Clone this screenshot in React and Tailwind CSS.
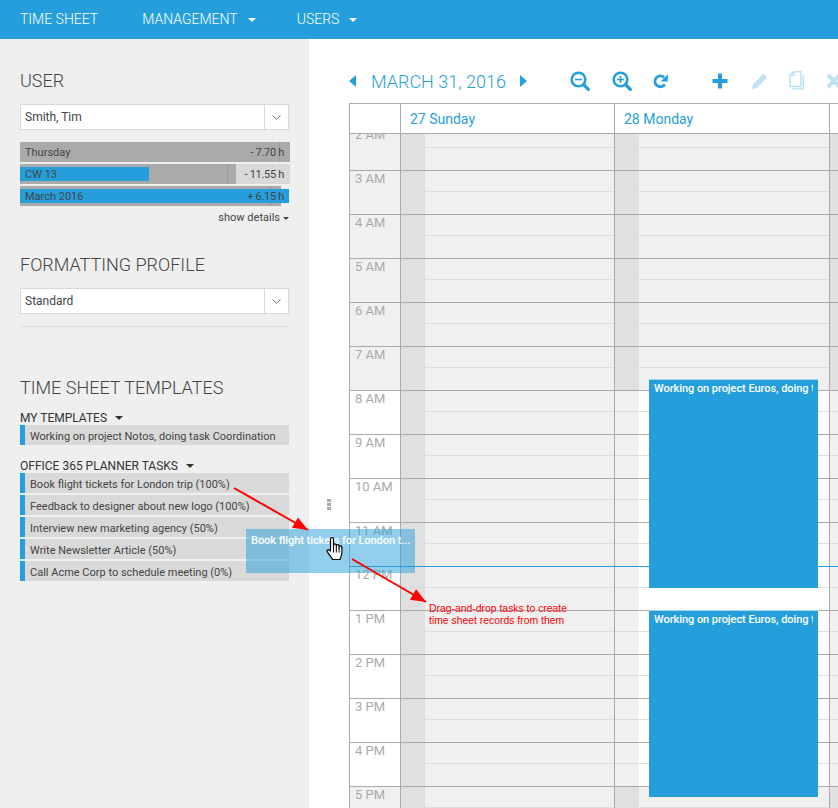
import React from 'react';
import { ChevronDown } from 'lucide-react';

const hours = ['2 AM', '3 AM', '4 AM', '5 AM', '6 AM', '7 AM', '8 AM', '9 AM', '10 AM', '11 AM', '12 PM', '1 PM', '2 PM', '3 PM', '4 PM', '5 PM', '6 PM'];
const myTemplates = ['Working on project Notos, doing task Coordination'];
const plannerTasks = [
    'Book flight tickets for London trip (100%)',
    'Feedback to designer about new logo (100%)',
    'Interview new marketing agency (50%)',
    'Write Newsletter Article (50%)',
    'Call Acme Corp to schedule meeting (0%)',
];

const Caret = ({ className = 'border-t-white', size = 'border-x-[4px] border-t-[4px]' }) => (
    <span className={`block w-0 h-0 border-x-transparent ${size} ${className}`} />
);

const Heading = ({ children, className = '' }) => (
    <h2 className={`h-[26px] leading-[26px] text-[18px] font-light text-[#444] uppercase ${className}`}>{children}</h2>
);

const Dropdown = ({ value }) => (
    <div className="h-[26px] w-[269px] flex bg-white border border-[#d9d9d9] text-[12px] text-[#444]">
        <div className="flex-1 pl-1 leading-[24px]">{value}</div>
        <div className="w-[24px] border-l border-[#d9d9d9] flex items-center justify-center">
            <ChevronDown size={15} strokeWidth={1.25} className="text-[#555]" />
        </div>
    </div>
);

const Bar = ({ label, value, greyWidth, tickAt, fill, track = 'bg-transparent' }) => (
    <div className={`relative h-5 w-[270px] text-[11px] leading-[21px] text-[#444] ${track}`}>
        <div className="absolute left-0 top-0 h-5 bg-[#aaa]" style={{ width: greyWidth }} />
        <div className="absolute top-0 h-5 w-px bg-[#999]" style={{ left: tickAt }} />
        {fill && <div className="absolute left-0 top-[3px] h-[14px] bg-[#259fdb]" style={{ width: fill }} />}
        <div className="relative flex justify-between pl-[5px] pr-[6px]">
            <span>{label}</span>
            <span className="tracking-[-0.3px]">{value}</span>
        </div>
    </div>
);

const TaskRow = ({ text }) => (
    <div className="h-5 w-[269px] flex bg-[#d9d9d9] text-[11px] leading-[21px] text-[#444]">
        <div className="w-[5px] shrink-0 bg-[#259fdb]" />
        <div className="pl-[5px] pt-px whitespace-nowrap">{text}</div>
    </div>
);

const Sidebar = () => (
    <aside className="w-[309px] shrink-0 bg-[#efefef] pl-5 pt-[29px]">
        <Heading>User</Heading>
        <div className="mt-[10px]"><Dropdown value="Smith, Tim" /></div>
        <div className="mt-3 flex flex-col gap-[2px]">
            <Bar label="Thursday" value="- 7.70 h" greyWidth={270} tickAt={259} />
            <Bar label="CW 13" value="- 11.55 h" greyWidth={216} tickAt={207} fill={129} track="bg-[#d9d9d9]" />
            <Bar label="March 2016" value="+ 6.15 h" greyWidth={261} tickAt={250} fill={269} />
        </div>
        <div className="mt-[3px] h-4 pt-[2px] w-[269px] flex items-center justify-end gap-[3px] text-[11px] text-[#444]">
            show details <Caret className="border-t-[#444]" size="border-x-[3px] border-t-[3px]" />
        </div>
        <Heading className="mt-[27px]">Formatting Profile</Heading>
        <div className="mt-[10px]"><Dropdown value="Standard" /></div>
        <div className="mt-3 h-px w-[269px] bg-[#ddd]" />
        <Heading className="mt-[48px]">Time Sheet Templates</Heading>
        <div className="mt-[9px] h-[15px] flex items-center gap-2 text-[12px] text-[#333]">
            MY TEMPLATES <Caret className="border-t-[#333]" />
        </div>
        {myTemplates.map((t) => <TaskRow key={t} text={t} />)}
        <div className="mt-[13px] h-[15px] flex items-center gap-2 text-[12px] text-[#333]">
            OFFICE 365 PLANNER TASKS <Caret className="border-t-[#333]" />
        </div>
        <div className="flex flex-col gap-[2px]">
            {plannerTasks.map((t) => <TaskRow key={t} text={t} />)}
        </div>
    </aside>
);

// toolbar glyphs drawn by hand, the icon packs do not have these exact shapes
const ZoomIcon = ({ plus }) => (
    <svg width="20" height="20" viewBox="0 0 20 20" fill="none" stroke="#259fdb">
        <circle cx="8.5" cy="8.5" r="6.8" strokeWidth="2.6" />
        <path d="M13.5 13.5 18.3 18.3" strokeWidth="3.2" strokeLinecap="round" />
        <path d="M5 8.5h7" strokeWidth="1.6" />
        {plus && <path d="M8.5 5v7" strokeWidth="1.6" />}
    </svg>
);

const RedoIcon = () => (
    <svg width="15" height="15" viewBox="0 0 15 15" fill="none">
        <path d="M11.8 10.400A5.400 5.400 0 1 1 11 3.400" stroke="#259fdb" strokeWidth="2.8" />
        <path d="M14.800 0.200V7.600H7.500Z" fill="#259fdb" />
    </svg>
);

const PlusIcon = () => (
    <svg width="16" height="16" viewBox="0 0 16 16" fill="#259fdb">
        <path d="M6 .5h4V6h5.500v4H10v5.500H6V10H.5V6H6Z" />
    </svg>
);

const PencilIcon = () => (
    <svg width="17" height="17" viewBox="0 0 17 17" fill="#bfe2f4">
        <path d="M12.500 .8 16.200 4.500 6 14.700 .8 16.200 2.300 11Z" />
    </svg>
);

const CopyIcon = () => (
    <svg width="16" height="20" viewBox="0 0 16 20" fill="none" stroke="#bfe2f4" strokeWidth="1.500">
        <path d="M1 3.500 5 .8H12V15.500H1Z" />
        <path d="M14.300 4V17.800H3.500" />
        <path d="M5 .8V4H1" />
    </svg>
);

const CloseIcon = () => (
    <svg width="16" height="16" viewBox="0 0 16 16" stroke="#bfe2f4" strokeWidth="4" className="shrink-0">
        <path d="M2 2 14 14M14 2 2 14" />
    </svg>
);

const Toolbar = () => (
    <div className="h-[64px] pt-5 flex items-center">
        <span className="w-0 h-0 border-y-[6px] border-y-transparent border-r-[7px] border-r-[#259fdb]" />
        <span className="ml-[15px] w-[135px] whitespace-nowrap text-[18px] font-light text-[#259fdb]">MARCH 31, 2016</span>
        <span className="ml-[14px] w-0 h-0 border-y-[6px] border-y-transparent border-l-[7px] border-l-[#259fdb]" />
        <div className="ml-[43px] flex items-center">
            <ZoomIcon />
            <div className="ml-[22px]"><ZoomIcon plus /></div>
            <div className="ml-[21px]"><RedoIcon /></div>
            <div className="ml-[44px]"><PlusIcon /></div>
            <div className="ml-[23px]"><PencilIcon /></div>
            <div className="ml-[21px]"><CopyIcon /></div>
            <div className="ml-[21px]"><CloseIcon /></div>
        </div>
    </div>
);

const DayCell = ({ working, width }) => (
    <div className={`${width} shrink-0 h-full flex border-r border-[#aaa] ${working ? 'bg-white' : 'bg-[#f0f0f0]'}`}>
        <div className={`w-6 h-full ${working ? 'bg-[#f0f0f0]' : 'bg-[#e0e0e0]'}`}>
            <div className="h-[21px] border-b border-[#ddd]" />
        </div>
        <div className="flex-1 h-full">
            <div className="h-[21px] border-b border-[#ddd]" />
        </div>
    </div>
);

const EventBlock = ({ className }) => (
    <div className={`absolute left-[299px] w-[169px] bg-[#259fdb] border-t border-[#a8d8f0] ${className}`}>
        <div className="ml-[5px] w-[159px] overflow-hidden whitespace-nowrap text-[11px] leading-[17px] tracking-[-0.05px] font-medium text-white">
            Working on project Euros, doing task Coordination
        </div>
    </div>
);

const Calendar = () => (
    <div className="relative w-[489px] h-[705px] overflow-hidden border-l border-t border-[#aaa]">
        <div className="flex h-[30px] border-b border-[#aaa] bg-white text-[14px] text-[#259fdb]">
            <div className="w-[51px] shrink-0 border-r border-[#aaa]" />
            <div className="w-[214px] shrink-0 border-r border-[#aaa] pl-[9px] leading-[31px]">27 Sunday</div>
            <div className="w-[215px] shrink-0 border-r border-[#aaa] pl-[9px] leading-[31px]">28 Monday</div>
        </div>
        <div className="h-[675px] overflow-hidden">
            <div className="-mt-[7px]">
                {hours.map((h, i) => {
                    const working = i >= 6 && i < 15;
                    return (
                        <div key={h} className="flex h-[44px] w-max border-b border-[#aaa]">
                            <div className={`w-[51px] shrink-0 border-r border-[#aaa] pl-[5px] text-[13px] leading-[16px] text-[#aaa] ${working ? 'bg-white' : 'bg-[#f0f0f0]'}`}>{h}</div>
                            <DayCell working={false} width="w-[214px]" />
                            <DayCell working={working} width="w-[215px]" />
                            <DayCell working={working} width="w-[214px]" />
                        </div>
                    );
                })}
            </div>
        </div>
        {/* current time */}
        <div className="absolute left-0 right-0 top-[462px] h-px bg-[#259fdb]" />
        <EventBlock className="top-[275px] h-[209px]" />
        <EventBlock className="top-[506px] h-[187px]" />
    </div>
);

const RedArrow = ({ x1, y1, x2, y2 }) => {
    const angle = (Math.atan2(y2 - y1, x2 - x1) * 180) / Math.PI;
    return (
        <g>
            <line x1={x1} y1={y1} x2={x2} y2={y2} stroke="#f00" strokeWidth="2" />
            <path d="M0 0-15-6-15 6Z" fill="#f00" transform={`translate(${x2} ${y2}) rotate(${angle})`} />
        </g>
    );
};

const HandCursor = () => (
    <svg width="19" height="24" viewBox="0 0 19 24" className="absolute left-[326px] top-[537px]">
        <path
            d="M4.500 14V2.200a1.500 1.500 0 0 1 3 0V9.500V8.200a1.400 1.400 0 0 1 2.800 0V10V9a1.400 1.400 0 0 1 2.800 0V11V10.200a1.400 1.400 0 0 1 2.800 0V15.500c0 3-1.200 4.500-2 7H6.500C5.500 20 3.500 18.500 1.300 14.800c-.9-1.500.9-2.800 2.100-1.500Z"
            fill="#fff"
            stroke="#000"
            strokeWidth="1.200"
            strokeLinejoin="round"
        />
        <path d="M7.500 10v5.500M10.300 10v5.500M13.100 11v4.500" stroke="#000" strokeWidth="1" />
    </svg>
);

const App = () => (
    <div className="relative w-[838px] h-[808px] overflow-hidden bg-white font-['Roboto',sans-serif]">
        <header className="h-[39px] bg-[#259fdb] flex items-center pl-5 text-[14px] font-light text-white">
            <span>TIME SHEET</span>
            <span className="ml-[44px]">MANAGEMENT</span>
            <span className="ml-[10px]"><Caret /></span>
            <span className="ml-[41px]">USERS</span>
            <span className="ml-[10px]"><Caret /></span>
        </header>
        <div className="flex h-[769px]">
            <Sidebar />
            <main className="flex-1 min-w-0 pl-10">
                <Toolbar />
                <Calendar />
            </main>
        </div>

        {/* splitter handle */}
        <div className="absolute left-[327px] top-[499px] flex flex-col gap-px">
            <div className="w-[4px] h-[3px] bg-[#aaa]" />
            <div className="w-[4px] h-[3px] bg-[#aaa]" />
            <div className="w-[4px] h-[3px] bg-[#aaa]" />
        </div>

        {/* task being dragged */}
        <div className="absolute left-[246px] top-[529px] w-[169px] h-[44px] bg-[#259fdb]/50 pl-[5px] pt-[4px] text-[11px] leading-[16px] tracking-[-0.05px] font-medium text-white whitespace-nowrap">
            Book flight tickets for London t...
        </div>

        <svg width="838" height="808" className="absolute left-0 top-0 pointer-events-none">
            <RedArrow x1={234} y1={488} x2={308} y2={530} />
            <RedArrow x1={352} y1={559} x2={426} y2={602} />
        </svg>
        <HandCursor />

        <div className="absolute left-[429px] top-[603px] text-[10.4px] leading-[12px] text-[#f00] font-['Liberation_Sans',sans-serif] whitespace-nowrap">
            Drag-and-drop tasks to create<br />time sheet records from them
        </div>
    </div>
);

export default App;
